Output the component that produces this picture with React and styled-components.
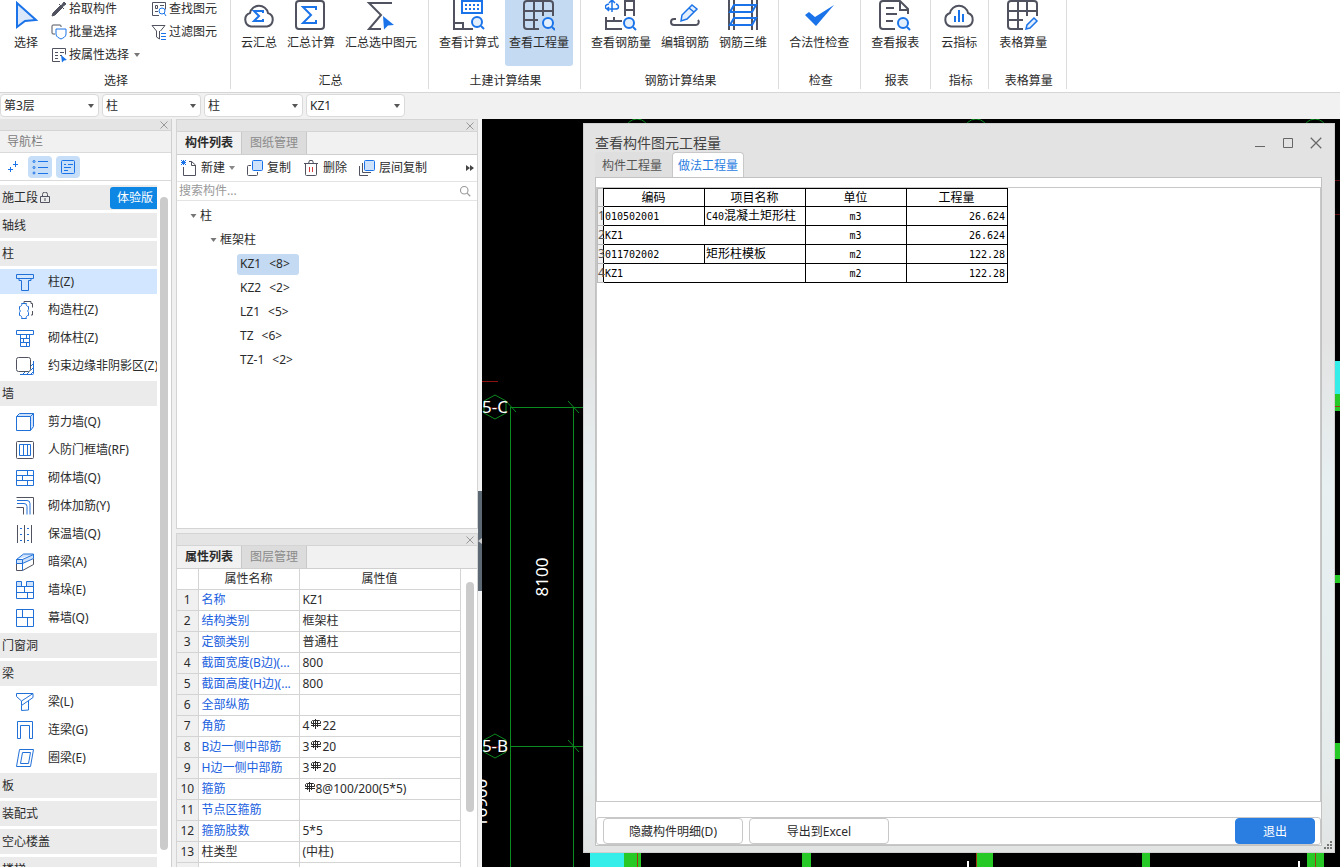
import React from "react";
import styled, { createGlobalStyle } from "styled-components";

const BLUE = "#1a73e8";
const DARK = "#50535f";

const GlobalStyle = createGlobalStyle`
    * {
        box-sizing: border-box;
    }
    body {
        margin: 0;
        overflow: hidden;
        font-family: "Noto Sans", "Noto Sans CJK SC", sans-serif;
        font-size: 12px;
        line-height: 16px;
        color: #2b2b2b;
        background-color: #f0f0f0;
    }
    button, input, select {
        font: inherit;
        color: inherit;
        margin: 0;
        padding: 0;
        border: 0;
        background: none;
    }
    button {
        white-space: nowrap;
    }
    svg {
        display: block;
        flex: none;
    }
`
const Page = styled.div`
    display: flex;
    flex-direction: column;
    height: 100vh;
`

/* ribbon */
const Ribbon = styled.header`
    display: flex;
    height: 93px;
    padding-bottom: 3px;
    background-color: #fff;
    border-bottom: 1px solid #d6d6d6;
`
const Group = styled.section`
    display: flex;
    flex-direction: column;
    justify-content: space-between;
    min-width: ${p => p.$min || 0}px;
    padding: 0 7px 0 6px;
    border-right: 1px solid #dcdcdc;
`
const GroupBody = styled.div`
    display: flex;
    gap: 2px;
`
const GroupName = styled.div`
    padding-left: 3px;
    text-align: center;
`
const BigButton = styled.button`
    display: flex;
    flex-direction: column;
    align-items: center;
    gap: 4px;
    height: 66px;
    padding: 0 4px;
    border-radius: 0 0 3px 3px;
    background-color: ${p => (p.$active ? "#c3daf2" : "transparent")};
`
const SmallColumn = styled.div`
    display: flex;
    flex-direction: column;
    gap: 7px;
    padding-top: 1px;
    margin-left: ${p => p.$left}px;
`
const SmallButton = styled.button`
    display: flex;
    align-items: center;
    gap: 2px;
    height: 16px;
    svg + svg {
        margin-left: 3px;
    }
`

/* combo bar */
const ComboBar = styled.div`
    display: flex;
    gap: 3px;
    height: 26px;
    padding: 1px 0 2px;
    background-color: #f1f1f1;
`
const ComboBox = styled.label`
    position: relative;
    width: 99px;
    select {
        appearance: none;
        width: 100%;
        height: 23px;
        padding: 0 3px;
        background-color: #fff;
        border: 1px solid #dadada;
        border-radius: 4px;
    }
    svg {
        position: absolute;
        top: 10px;
        right: 5px;
        pointer-events: none;
    }
`

/* work area */
const Work = styled.main`
    display: flex;
    flex: 1;
    min-height: 0;
`
const Strip = styled.div`
    display: flex;
    flex: none;
    align-items: center;
    justify-content: flex-end;
    height: 12px;
    padding-right: 2px;
    background-color: #e4e4e4;
    border-bottom: 1px solid #d4d4d4;
    button {
        padding: 1px;
    }
`
const Nav = styled.nav`
    display: flex;
    flex: none;
    flex-direction: column;
    width: 172px;
    background-color: #fff;
    border-right: 1px solid #cfcfcf;
`
const NavTitle = styled.div`
    height: 22px;
    padding: 3px 7px;
    color: #7d7d7d;
    background-color: #f1f1f1;
    border-bottom: 1px solid #dadada;
`
const NavTools = styled.div`
    display: flex;
    align-items: center;
    gap: 4px;
    height: 28px;
    border-bottom: 1px solid #dadada;
`
const NavTool = styled.button`
    display: flex;
    align-items: center;
    justify-content: center;
    width: 24px;
    height: 22px;
    border-radius: 4px;
    background-color: ${p => (p.$active ? "#c6def7" : "transparent")};
`
const NavScroll = styled.div`
    display: flex;
    flex: 1;
    gap: 3px;
    min-height: 0;
    padding-right: 3px;
`
const NavList = styled.div`
    display: flex;
    flex: 1;
    flex-direction: column;
    gap: 3px;
    min-width: 0;
    padding-top: 4px;
    overflow: hidden;
`
const NavGroup = styled.div`
    display: flex;
    flex: none;
    align-items: center;
    justify-content: space-between;
    height: 25px;
    padding-left: 2px;
    background-color: #ebebeb;
    > button {
        display: flex;
        align-items: center;
        gap: 2px;
    }
`
const NavItem = styled.button`
    display: flex;
    flex: none;
    align-items: center;
    gap: 14px;
    height: 25px;
    padding-left: 16px;
    overflow: hidden;
    background-color: ${p => (p.$active ? "#d2e7ff" : "#fff")};
`
const TrialButton = styled.button`
    && {
        height: 22px;
        padding: 0 4px 0 7px;
        color: #fff;
        background-color: #0e86e4;
        border-radius: 3px 0 0 3px;
    }
`
const Thumb = styled.div`
    width: 8px;
    margin: ${p => p.$margin};
    height: ${p => p.$height || "auto"};
    border-radius: 4px;
    background-color: #cbcbcb;
`
const Side = styled.div`
    display: flex;
    flex: none;
    flex-direction: column;
    gap: 4px;
    width: 302px;
    margin-left: 4px;
`
const Panel = styled.section`
    display: flex;
    flex-direction: column;
    flex: ${p => (p.$grow ? "1 1 0" : "none")};
    height: ${p => p.$height || "auto"};
    min-height: 0;
    overflow: hidden;
    background-color: #fff;
    border: 1px solid #d4d4d4;
    border-bottom-width: ${p => (p.$grow ? "0" : "1px")};
`
const Tabs = styled.div`
    display: flex;
    flex: none;
    height: 23px;
    background-color: #f1f1f1;
    border-bottom: 1px solid #cfcfcf;
`
const Tab = styled.button`
    width: 65px;
    color: ${p => (p.$active ? "#2b2b2b" : "#8b8b8b")};
    font-weight: ${p => (p.$active ? "bold" : "normal")};
    background-color: ${p => (p.$active ? "#f1f1f1" : "#dcdcdc")};
    border-right: 1px solid #c8c8c8;
`
const Tools = styled.div`
    display: flex;
    align-items: center;
    gap: 12px;
    height: 27px;
    padding-left: 4px;
    border-bottom: 1px solid #e4e4e4;
    button {
        display: flex;
        align-items: center;
        gap: 4px;
    }
    button:last-child {
        height: 20px;
        margin-left: auto;
        padding: 0 3px;
    }
`
const Search = styled.label`
    display: flex;
    align-items: center;
    height: 19px;
    padding: 0 6px 0 2px;
    border-bottom: 1px solid #e4e4e4;
    input {
        flex: 1;
        outline: none;
    }
    input::placeholder {
        color: #999;
        opacity: 1;
    }
`
const Tree = styled.ul`
    margin: 0;
    padding: 3px 0;
    list-style: none;
    ul {
        padding: 0;
    }
`
const TreeRow = styled.div`
    display: flex;
    align-items: center;
    gap: 3px;
    height: 24px;
    padding-left: ${p => p.$indent}px;
`
const TreeLeaf = styled.button`
    display: flex;
    gap: 8px;
    height: 21px;
    padding: 2px 9px 3px 3px;
    border-radius: 3px;
    background-color: ${p => (p.$active ? "#c3daf2" : "transparent")};
`
const PropBody = styled.div`
    display: flex;
    justify-content: space-between;
    padding-right: 3px;
`
const PropTable = styled.table`
    width: 283px;
    table-layout: fixed;
    border-collapse: collapse;
    th, td {
        height: 21px;
        padding: 0 3px;
        font-weight: normal;
        text-align: left;
        white-space: nowrap;
        overflow: hidden;
        border-right: 1px solid #d4d4d4;
        border-bottom: 1px solid #d4d4d4;
    }
    thead th, thead td {
        height: 20px;
        text-align: center;
    }
    tbody th {
        padding: 0;
        text-align: center;
        background-color: #f0f0f0;
    }
`
const PropName = styled.td`
    color: ${p => (p.$plain ? "#2b2b2b" : "#1b5fe0")};
`
const Rebar = styled.svg`
    && {
        display: inline-block;
        margin: 0 1px 0 2px;
        vertical-align: 1px;
    }
`
const Splitter = styled.div`
    display: flex;
    flex: none;
    flex-direction: column;
    width: 4px;
    padding-top: 372px;
    background-color: #f4f4f4;
    button {
        display: flex;
        align-items: center;
        width: 4px;
        height: 100px;
        background-color: #5d6875;
    }
`

/* model view and the window over it */
const Canvas = styled.div`
    position: relative;
    flex: 1;
    min-width: 0;
    overflow: hidden;
    background-color: #000;
`
const Drawing = styled.svg`
    width: 100%;
    height: 100%;
    fill: none;
    stroke: #0b8a20;
    text {
        font-size: 17px;
        fill: #fff;
        stroke: none;
        text-anchor: middle;
    }
`
const Dialog = styled.section`
    position: absolute;
    top: 4px;
    right: 5px;
    bottom: 14px;
    left: 101px;
    display: flex;
    flex-direction: column;
    padding: 0 12px 6px 11px;
    background: linear-gradient(#e3e3e3 30%, #e8f0f2 50%, #e5ebea 90%, #e2e4e4);
    border: 1px solid #d0d0d0;
`
const TitleBar = styled.div`
    display: flex;
    align-items: center;
    justify-content: space-between;
    height: 28px;
    padding-top: 9px;
    h1 {
        margin: 0;
        font-size: 14px;
        font-weight: normal;
        line-height: 20px;
        color: #444;
    }
    div {
        display: flex;
        gap: 16px;
    }
`
const DialogTabs = styled.div`
    display: flex;
    height: 25px;
`
const DialogTab = styled.button`
    height: ${p => (p.$active ? "26px" : "25px")};
    padding: ${p => (p.$active ? "0 5px" : "2px 9px 0 6px")};
    color: ${p => (p.$active ? "#2a7de1" : "#555")};
    background-color: ${p => (p.$active ? "#fff" : "#dfdfdf")};
    border: 1px solid ${p => (p.$active ? "#c8c8c8" : "transparent")};
    border-bottom: 0;
    border-radius: 4px 4px 0 0;
`
const DialogBody = styled.div`
    display: flex;
    flex: 1;
    flex-direction: column;
    gap: 15px;
    min-height: 0;
    padding-top: 9px;
    background-color: #fff;
    border: 1px solid #c2c2c2;
`
const Report = styled.div`
    flex: 1;
    min-height: 0;
    border: 1px solid #c8c8c8;
`
const ReportTable = styled.table`
    table-layout: fixed;
    width: 410px;
    border-collapse: collapse;
    color: #000;
    th, td {
        height: 19px;
        padding: 0 2px 0 1px;
        line-height: 14px;
        font-weight: normal;
        text-align: left;
        white-space: nowrap;
        border: 1px solid #000;
    }
    thead th {
        height: 18px;
        text-align: center;
    }
    tr > th:first-child {
        padding: 0;
        color: #555;
        background-color: #f0f0f0;
        border-color: #bbb;
        border-right-color: #000;
    }
`
const Mono = styled.span`
    font-family: "DejaVu Sans Mono", "Liberation Mono", monospace;
    font-size: 10px;
`
const UnitCell = styled.td`
    && {
        text-align: center;
    }
`
const AmountCell = styled.td`
    && {
        text-align: right;
    }
`
const Footer = styled.div`
    display: flex;
    gap: 6px;
    height: 28px;
    padding: 0 5px 0 6px;
    border: 1px solid #c8c8c8;
    border-radius: 3px;
    button {
        width: 140px;
        height: 26px;
        padding-top: 2px;
        background-color: #fff;
        border: 1px solid #c8c8c8;
        border-radius: 4px;
    }
    button:last-child {
        width: 80px;
        margin-left: auto;
        color: #fff;
        background-color: #2a7de1;
        border-color: #2a7de1;
    }
`
const Grip = styled.svg`
    position: absolute;
    right: 2px;
    bottom: 3px;
`

/* icons */
const Caret = ({ size = 6, color = "#555" }) => (
    <svg width={size} height="4" viewBox="0 0 6 4"><path d="M0 0h6L3 4z" fill={color} /></svg>
)
const Close = ({ size = 8, color = "#999" }) => (
    <svg width={size} height={size} viewBox="0 0 8 8" stroke={color} strokeWidth={size > 8 ? 0.8 : 1}><path d="M.5.5l7 7M7.5.5l-7 7" /></svg>
)
const Lens = ({ x, y }) => (
    <g stroke={BLUE}>
        <circle cx={x} cy={y} r="5" fill="#e4effd" />
        <path d={`M${x + 4} ${y + 4}l3 3`} />
    </g>
)
const big = {
    select: <path d="M7 3L26 20L15 21L7 27Z" fill="#dbe8fb" stroke={BLUE} />,
    cloudSum: <>
        <path d="M8 26.500a7 7 0 0 1-1-13.500a9.200 9.200 0 0 1 18 0a7 7 0 0 1-1 13.500z" />
        <path d="M20 13v-2h-9l5 5l-5 5h9v-2" stroke={BLUE} />
    </>,
    sumBox: <>
        <rect x="1" y="1" width="28" height="28" rx="3" />
        <path d="M21 10V7H8l8 8l-8 8h13v-3" stroke={BLUE} />
    </>,
    sumPick: <>
        <path d="M27 3H4l12 12L4 29h12" />
        <path d="M18 16l11 9l-6 .5l-4 4z" fill={BLUE} stroke="none" />
    </>,
    formula: <>
        <path d="M1 0v29h19M1 23h9v5" />
        <path d="M9 0v13h20V0M9 1h20" stroke={BLUE} />
        <path d="M12 5h2m2 0h2m2 0h2m2 0h2M12 9h2m2 0h2m2 0h2m2 0h2" stroke={BLUE} />
        <Lens x={24} y={22} />
    </>,
    quantity: <>
        <path d="M16 29H4a3 3 0 0 1-3-3V4a3 3 0 0 1 3-3h23a3 3 0 0 1 3 3v12M1 11h29M1 20h14M11 1v28M20 1v15" />
        <Lens x={25} y={23} />
    </>,
    rebar: <>
        <path d="M20 16V1h9v15M20 10h9M1 17v12h16M1 21h16M9 17v4" />
        <path d="M7 2v10M4 3l3-3l3 3M4 4c-5 1-5 5 0 5h6c5 0 4-4 1-5M4 7l-2 2l2 2" stroke={BLUE} strokeWidth="1.500" />
        <Lens x={24} y={23} />
    </>,
    editRebar: <>
        <path d="M7 19H5a3 3 0 0 0 0 6h22a3 3 0 0 0 2-5" />
        <path d="M12 21l1-6l10-10l5 4l-10 10zM20 8l5 4" stroke={BLUE} strokeWidth="1.500" fill="#e4effd" />
    </>,
    rebar3d: <>
        <path d="M2 0v30M7 0v30M25 0v30M30 0v30" />
        <path d="M7 5h22l-4 7H3zM7 18h22l-4 7H3z" stroke={BLUE} />
    </>,
    check: <path d="M2 15l4-3l6 5L31 5L13 26z" fill={BLUE} stroke="none" />,
    report: <>
        <path d="M16 29H4a3 3 0 0 1-3-3V4a3 3 0 0 1 3-3h17l8 8v5M21 1v9h9M7 8h8M7 14h11M7 21h7" />
        <Lens x={24} y={23} />
    </>,
    cloudIndex: <>
        <path d="M8 26.500a7 7 0 0 1-1-13.500a9.200 9.200 0 0 1 18 0a7 7 0 0 1-1 13.500z" />
        <path d="M12 16v6M16 10v12M20 14v8" stroke={BLUE} />
    </>,
    sheet: <>
        <path d="M16 29H4a3 3 0 0 1-3-3V4a3 3 0 0 1 3-3h23a3 3 0 0 1 3 3v12M1 11h29M1 20h15M11 1v28M20 1v15" />
        <path d="M19 29l1-4l7-7l3 3l-7 7z" stroke={BLUE} strokeWidth="1.500" fill="#e4effd" />
    </>
}
const BigIcon = ({ name }) => (
    <svg width="32" height="31" viewBox="0 0 32 31" fill="none" stroke={DARK} strokeWidth="2">{big[name]}</svg>
)
const small = {
    pick: <path d="M1 15l1-3l7-7l2 2l-7 7zM8 3l5 5M10 5l3-4l2 2l-4 3" fill={DARK} />,
    batch: <>
        <path d="M4 10H2a1 1 0 0 1-1-1V2a1 1 0 0 1 1-1h7a1 1 0 0 1 1 1v1" />
        <path d="M5 5h10v5c0 3-3 4-5 5c-2-1-5-2-5-5z" stroke={BLUE} />
    </>,
    byProp: <>
        <path d="M9 14.500H1.500v-13h13v6M4 5.500h3m2 0h4M4 8.500h3m2 0h2M4 11.500h3" />
        <path d="M10 8l6 5l-3 .5l-2 2z" fill={BLUE} stroke="none" />
    </>,
    find: <>
        <path d="M8 14.500H1.500v-13h13v7M4.500 4.500h2v3h-2zM9 4.500h4M4 10.500h3" />
        <g stroke={BLUE}><circle cx="11" cy="10" r="3" /><path d="M13 12l2 3" /></g>
    </>,
    filter: <>
        <path d="M1 1.500h13L9.500 7M1 1.500L5.500 7v6l3 2V7" />
        <path d="M10 9.500h5M10 12.500h5M10 15.500h5" stroke={BLUE} />
    </>,
    create: <>
        <path d="M2.500 7v8.500h12V5l-4-3.500H8M10.500 1.500v4h4" />
        <path d="M0 0l5 5M5 0L0 5M2.500 0v5M0 2.500h5" stroke={BLUE} />
    </>,
    copy: <>
        <path d="M4 5.500H1.500a1 1 0 0 0-1 1v8a1 1 0 0 0 1 1h8a1 1 0 0 0 1-1V12" />
        <rect x="5.500" y=".5" width="10" height="10" rx="1" stroke={BLUE} fill="#cfe2fb" />
    </>,
    remove: <>
        <path d="M1 3.500h14M5.500 3.500l1-3h3l1 3M2.500 4v10.500a1 1 0 0 0 1 1h9a1 1 0 0 0 1-1V4" />
        <path d="M6.500 7v5M9.500 7v5" stroke="#d43c3c" />
    </>,
    layerCopy: <>
        <path d="M.5 6v9.500H9M3.500 3v9.500H12" />
        <rect x="5.500" y=".5" width="10" height="10" rx="1" stroke={BLUE} fill="#cfe2fb" />
    </>,
    plus: <path d="M11.500 2v6M9 5.500h5M6.500 8v5M4 10.500h5" stroke={BLUE} />,
    list: <g stroke={BLUE}><path d="M6 2.500h10M6 8.500h10M6 14.500h10" /><circle cx="2" cy="2.500" r="1" /><circle cx="2" cy="8.500" r="1" /><circle cx="2" cy="14" r="1" /></g>,
    card: <g stroke={BLUE}><rect x="1.500" y="1.500" width="13" height="13" rx="1" /><path d="M4 5.500h2m2 0h5M4 8.500h7M4 11.500h4" /></g>,
    search: <g stroke="#999" strokeWidth="1.500"><circle cx="7" cy="7" r="5" /><path d="M11 11l4 4" /></g>
}
const SmallIcon = ({ name, size = 16 }) => (
    <svg width={size} height={size} viewBox="0 0 16 16" fill="none" stroke={DARK}>{small[name]}</svg>
)
const item = {
    column: <path d="M.5 1.500h17v4H.5zM3 5.500v2h2.500v10h7v-10H15v-2" />,
    shaped: <>
        <path d="M8 2.500v-2h7v2h1.500v4M16.500 10v4H15" stroke={DARK} />
        <path d="M5.500 2.500h5a2 2 0 0 0 2 3v3a2 2 0 0 0 0 3v3a2 2 0 0 0-2 3h-5a2 2 0 0 0-2-3v-3a2 2 0 0 0 0-3v-3a2 2 0 0 0 2-3z" />
    </>,
    brickColumn: <path d="M.5 1.500h17v4H.5zM4.500 5.500v12h9v-12M4.500 9.500h9M4.500 13.500h9M10.500 5.500v4M7.500 9.500v4M10.500 13.500v4" />,
    edge: <>
        <path d="M4 17.500h12.500a1 1 0 0 0 1-1V4M7 17l2-2M11 17l2-2M15 17l2-2M15 13l2-2M15 9l2-2" />
        <rect x=".5" y=".5" width="14" height="14" rx="2" stroke={DARK} fill="#fff" />
    </>,
    wall: <><path d="M.5 3.500l3-3h14v13l-3 4z" fill="#cfe2fb" /><path d="M.5 3.500h14v14H.5zM14.500 3.500l3-3" fill="#fff" /></>,
    gate: <><rect x=".5" y=".5" width="17" height="17" rx="1" stroke={DARK} /><path d="M3.500 3.500h11v11h-11zM7.500 3v12M11.500 3v12" /></>,
    brick: <path d="M.5 1.500h17v15H.5zM.5 6.500h17M.5 11.500h17M11.500 1v5M6.500 6v6M11.500 12v5" />,
    brickBar: <><path d="M.5.5h17v17M.5 10.500h7v7" stroke={DARK} /><path d="M1 3.500h10a3 3 0 0 1 3 3v11M1 6.500h7a3 3 0 0 1 3 3v8" /></>,
    insulate: <><path d="M1.500 0v18M8.500 0v18M15.500 0v18" stroke={DARK} /><path d="M4 3.500h2M4 9.500h2M4 15.500h2M11 3.500h2M11 9.500h2M11 15.500h2" /></>,
    hidden: <>
        <path d="M.5 9.500v8h6l11-6v-6" stroke={DARK} />
        <path d="M.5 6.500l7-5.500h10v4.500l-11 5h-6zM.5 6.500h6l11-5M6.500 6.500v11" fill="#cfe2fb" />
    </>,
    pier: <><path d="M.5.5h5v5h-5zM10.500.5h7v5h-7z" fill="#cfe2fb" /><path d="M.5 5.500h17v12H.5zM.5 11.500h17M8.500 5.500v6M11.500 11.500v6" /></>,
    curtain: <path d="M.5.5h17v17H.5zM.5 8.500h17M6.500 0v8M11.500 9v8" />,
    beam: <path d="M.5.5h16.500L5.500 8L.5 3.500zM17 .5v4L5.500 12.500V8M5.500 12.500v5l7-.5V8" />,
    link: <path d="M1.500 17.500V.5h15v17h-3V4.500h-9v13z" />,
    ring: <path d="M3.500.5h14l-3 17H.5zM6.500 3.500h8l-2 11H4.500z" />
}
const ItemIcon = ({ name }) => (
    <svg width="18" height="18" viewBox="0 0 18 18" fill="none" stroke="#2070d8">{item[name]}</svg>
)
const Lock = () => (
    <svg width="10" height="12" viewBox="0 0 10 12" fill="none" stroke={DARK}><path d="M.5 4.500h9v6h-9zM2.500 4.500v-2a2 2 0 0 1 5 0v2M5 6v3" /></svg>
)

const ribbonGroups = [
    { name: "汇总", buttons: [["cloudSum", "云汇总"], ["sumBox", "汇总计算"], ["sumPick", "汇总选中图元"]] },
    { name: "土建计算结果", buttons: [["formula", "查看计算式"], ["quantity", "查看工程量"]] },
    { name: "钢筋计算结果", buttons: [["rebar", "查看钢筋量"], ["editRebar", "编辑钢筋"], ["rebar3d", "钢筋三维"]] },
    { name: "检查", buttons: [["check", "合法性检查"]] },
    { name: "报表", buttons: [["report", "查看报表"]] },
    { name: "指标", buttons: [["cloudIndex", "云指标"]] },
    { name: "表格算量", min: 78, buttons: [["sheet", "表格算量"]] }
]
const combos = [["楼层", "第3层"], ["构件类别", "柱"], ["构件类型", "柱"], ["构件", "KZ1"]]
const navGroups = [
    { name: "轴线" },
    { name: "柱", items: [["column", "柱(Z)"], ["shaped", "构造柱(Z)"], ["brickColumn", "砌体柱(Z)"], ["edge", "约束边缘非阴影区(Z)"]] },
    { name: "墙", items: [["wall", "剪力墙(Q)"], ["gate", "人防门框墙(RF)"], ["brick", "砌体墙(Q)"], ["brickBar", "砌体加筋(Y)"], ["insulate", "保温墙(Q)"], ["hidden", "暗梁(A)"], ["pier", "墙垛(E)"], ["curtain", "幕墙(Q)"]] },
    { name: "门窗洞" },
    { name: "梁", items: [["beam", "梁(L)"], ["link", "连梁(G)"], ["ring", "圈梁(E)"]] },
    { name: "板" },
    { name: "装配式" },
    { name: "空心楼盖" },
    { name: "楼梯" }
]
const leaves = [["KZ1", 8], ["KZ2", 2], ["LZ1", 5], ["TZ", 6], ["TZ-1", 2]]
// "#" in a value stands for the rebar grade sign
const props = [
    ["名称", "KZ1"],
    ["结构类别", "框架柱"],
    ["定额类别", "普通柱"],
    ["截面宽度(B边)(...", "800"],
    ["截面高度(H边)(...", "800"],
    ["全部纵筋", ""],
    ["角筋", "4#22"],
    ["B边一侧中部筋", "3#20"],
    ["H边一侧中部筋", "3#20"],
    ["箍筋", "#8@100/200(5*5)"],
    ["节点区箍筋", ""],
    ["箍筋肢数", "5*5"],
    ["柱类型", "(中柱)"]
]
const quantities = [
    { code: "010502001", prefix: "C40", name: "混凝土矩形柱", unit: "m3", amount: "26.624" },
    { code: "KZ1", unit: "m3", amount: "26.624" },
    { code: "011702002", name: "矩形柱模板", unit: "m2", amount: "122.28" },
    { code: "KZ1", unit: "m2", amount: "122.28" }
]

function RebarValue({ value }) {
    const [before, after] = value.split("#")
    if (after === undefined) return value
    return (
        <>
            {before}
            <Rebar width="10" height="10" viewBox="0 0 10 10" fill="none" stroke="#2b2b2b">
                <path d="M4.500 0v10M2.500 2v6M6.500 2v6M0 6.500h10M2.500 1.500h-1l-1 1v2h9v-2l-1-1h-6" />
            </Rebar>
            {after}
        </>
    )
}

function TopRibbon() {
    return (
        <Ribbon>
            <Group $min={231}>
                <GroupBody>
                    <BigButton><BigIcon name="select" />选择</BigButton>
                    <SmallColumn $left={3}>
                        <SmallButton><SmallIcon name="pick" />拾取构件</SmallButton>
                        <SmallButton><SmallIcon name="batch" />批量选择</SmallButton>
                        <SmallButton><SmallIcon name="byProp" />按属性选择 <Caret color="#777" /></SmallButton>
                    </SmallColumn>
                    <SmallColumn $left={9}>
                        <SmallButton><SmallIcon name="find" />查找图元</SmallButton>
                        <SmallButton><SmallIcon name="filter" />过滤图元</SmallButton>
                    </SmallColumn>
                </GroupBody>
                <GroupName>选择</GroupName>
            </Group>
            {ribbonGroups.map(g => (
                <Group key={g.name} $min={g.min}>
                    <GroupBody>
                        {g.buttons.map(([icon, label]) => (
                            <BigButton key={label} $active={icon === "quantity"}>
                                <BigIcon name={icon} />{label}
                            </BigButton>
                        ))}
                    </GroupBody>
                    <GroupName>{g.name}</GroupName>
                </Group>
            ))}
        </Ribbon>
    )
}

function Navigator() {
    return (
        <Nav>
            <Strip><button aria-label="关闭"><Close /></button></Strip>
            <NavTitle>导航栏</NavTitle>
            <NavTools>
                <NavTool aria-label="添加"><SmallIcon name="plus" /></NavTool>
                <NavTool aria-label="列表" $active><SmallIcon name="list" /></NavTool>
                <NavTool aria-label="卡片" $active><SmallIcon name="card" /></NavTool>
            </NavTools>
            <NavScroll>
                <NavList>
                    <NavGroup>
                        <button>施工段<Lock /></button>
                        <TrialButton>体验版</TrialButton>
                    </NavGroup>
                    {navGroups.map(g => (
                        <React.Fragment key={g.name}>
                            <NavGroup><button>{g.name}</button></NavGroup>
                            {g.items && g.items.map(([icon, label]) => (
                                <NavItem key={label} $active={icon === "column"}>
                                    <ItemIcon name={icon} />{label}
                                </NavItem>
                            ))}
                        </React.Fragment>
                    ))}
                </NavList>
                <Thumb $margin="16px 0 17px" />
            </NavScroll>
        </Nav>
    )
}

function ComponentPanel() {
    return (
        <Panel $height="410px">
            <Strip><button aria-label="关闭"><Close /></button></Strip>
            <Tabs>
                <Tab $active>构件列表</Tab>
                <Tab>图纸管理</Tab>
            </Tabs>
            <Tools>
                <button><SmallIcon name="create" />新建 <Caret color="#888" /></button>
                <button><SmallIcon name="copy" />复制</button>
                <button><SmallIcon name="remove" />删除</button>
                <button><SmallIcon name="layerCopy" />层间复制</button>
                <button aria-label="更多">
                    <svg width="8" height="6" viewBox="0 0 8 6"><path d="M0 0l4 3l-4 3zM4 0l4 3l-4 3z" fill="#444" /></svg>
                </button>
            </Tools>
            <Search>
                <input type="search" aria-label="搜索构件" placeholder="搜索构件..." />
                <SmallIcon name="search" size={12} />
            </Search>
            <Tree>
                <li>
                    <TreeRow $indent={13}><Caret size={7} color="#777" />柱</TreeRow>
                    <ul>
                        <li>
                            <TreeRow $indent={33}><Caret size={7} color="#777" />框架柱</TreeRow>
                        </li>
                        {leaves.map(([name, count]) => (
                            <li key={name}>
                                <TreeRow $indent={60}>
                                    <TreeLeaf $active={name === "KZ1"}>
                                        <span>{name}</span> <span>{`<${count}>`}</span>
                                    </TreeLeaf>
                                </TreeRow>
                            </li>
                        ))}
                    </ul>
                </li>
            </Tree>
        </Panel>
    )
}

function PropertyPanel() {
    return (
        <Panel $grow>
            <Strip><button aria-label="关闭"><Close /></button></Strip>
            <Tabs>
                <Tab $active>属性列表</Tab>
                <Tab>图层管理</Tab>
            </Tabs>
            <PropBody>
                <PropTable>
                    <colgroup>
                        <col width="21" />
                        <col width="101" />
                        <col width="161" />
                    </colgroup>
                    <thead>
                        <tr><td /><th>属性名称</th><th>属性值</th></tr>
                    </thead>
                    <tbody>
                        {props.map(([name, value], i) => (
                            <tr key={name}>
                                <th>{i + 1}</th>
                                <PropName $plain={i > 11}>{name}</PropName>
                                <td><RebarValue value={value} /></td>
                            </tr>
                        ))}
                        <tr><th /><td /><td /></tr>
                    </tbody>
                </PropTable>
                <Thumb $margin="13px 0 0" $height="230px" />
            </PropBody>
        </Panel>
    )
}

function ModelDrawing() {
    return (
        <Drawing>
            <path d="M0 262.500h16" stroke="#8c1010" />
            <path d="M28 288.500h80M28 627.500h80M28.500 288v500M91.500 288v500" />
            <path d="M23 281l11 12M86 282l11 12M86 621l11 12" />
            <path d="M13 276l11 6v12l-11 6l-11-6v-12zM13 615l11 6v12l-11 6l-11-6v-12z" />
            <path d="M8 289h10M8 628h10" stroke="#8c1010" />
            <text x="13" y="294">5-C</text>
            <text x="13" y="633">5-B</text>
            <text transform="translate(66 458) rotate(-90)">8100</text>
            <text transform="translate(5 684) rotate(-90)">16900</text>
            <circle cx="155" cy="12" r="12" />
            <circle cx="494" cy="12" r="12" />
            <circle cx="833" cy="12" r="12" />
            <g stroke="none">
                <path d="M108 734h34v20h-34zM852 242h10v33h-10z" fill="#35eeea" />
                <path d="M142 734h17v20h-17zM320 734h9v20h-9zM494 734h17v20h-17zM660 734h8v20h-8zM825 734h17v20h-17zM852 275h10v17h-10zM852 456h10v8h-10zM852 624h10v16h-10z" fill="#27c927" />
            </g>
            <path d="M155.500 734v20M494.500 734v20M833.500 734v20M852 287.500h10" stroke="#a03c14" />
            <path d="M852 61.500h10M852 95.500h10" stroke="#5a0c10" />
            <path d="M486 742v12M817 742v12" stroke="#fff" strokeWidth="2" />
        </Drawing>
    )
}

function QuantityDialog() {
    return (
        <Dialog role="dialog" aria-label="查看构件图元工程量">
            <TitleBar>
                <h1>查看构件图元工程量</h1>
                <div>
                    <button aria-label="最小化">
                        <svg width="12" height="12" stroke="#666"><path d="M1 9.500h10" /></svg>
                    </button>
                    <button aria-label="最大化">
                        <svg width="12" height="12" fill="none" stroke="#666"><path d="M1.500 1.500h9v9h-9z" /></svg>
                    </button>
                    <button aria-label="关闭"><Close size={12} color="#666" /></button>
                </div>
            </TitleBar>
            <DialogTabs>
                <DialogTab>构件工程量</DialogTab>
                <DialogTab $active>做法工程量</DialogTab>
            </DialogTabs>
            <DialogBody>
                <Report>
                    <ReportTable>
                        <colgroup>
                            <col width="6" />
                            <col width="101" />
                            <col width="101" />
                            <col width="101" />
                            <col width="101" />
                        </colgroup>
                        <thead>
                            <tr><th /><th>编码</th><th>项目名称</th><th>单位</th><th>工程量</th></tr>
                        </thead>
                        <tbody>
                            {quantities.map((q, i) => (
                                <tr key={i}>
                                    <th>{i + 1}</th>
                                    <td colSpan={q.name ? 1 : 2}><Mono>{q.code}</Mono></td>
                                    {q.name && <td><Mono>{q.prefix}</Mono>{q.name}</td>}
                                    <UnitCell><Mono>{q.unit}</Mono></UnitCell>
                                    <AmountCell><Mono>{q.amount}</Mono></AmountCell>
                                </tr>
                            ))}
                        </tbody>
                    </ReportTable>
                </Report>
                <Footer>
                    <button>隐藏构件明细(D)</button>
                    <button>导出到Excel</button>
                    <button>退出</button>
                </Footer>
            </DialogBody>
            <Grip width="8" height="8" fill="#777">
                <path d="M6 0h2v2H6zM3 3h2v2H3zM6 3h2v2H6zM0 6h2v2H0zM3 6h2v2H3zM6 6h2v2H6z" />
            </Grip>
        </Dialog>
    )
}

export default function App() {
    return (
        <Page>
            <GlobalStyle />
            <TopRibbon />
            <ComboBar>
                {combos.map(([label, value]) => (
                    <ComboBox key={label}>
                        <select aria-label={label}><option>{value}</option></select>
                        <Caret />
                    </ComboBox>
                ))}
            </ComboBar>
            <Work>
                <Navigator />
                <Side>
                    <ComponentPanel />
                    <PropertyPanel />
                </Side>
                <Splitter>
                    <button aria-label="收起">
                        <svg width="4" height="6"><path d="M4 0v6L0 3z" fill="#ccc" /></svg>
                    </button>
                </Splitter>
                <Canvas>
                    <ModelDrawing />
                    <QuantityDialog />
                </Canvas>
            </Work>
        </Page>
    )
}
